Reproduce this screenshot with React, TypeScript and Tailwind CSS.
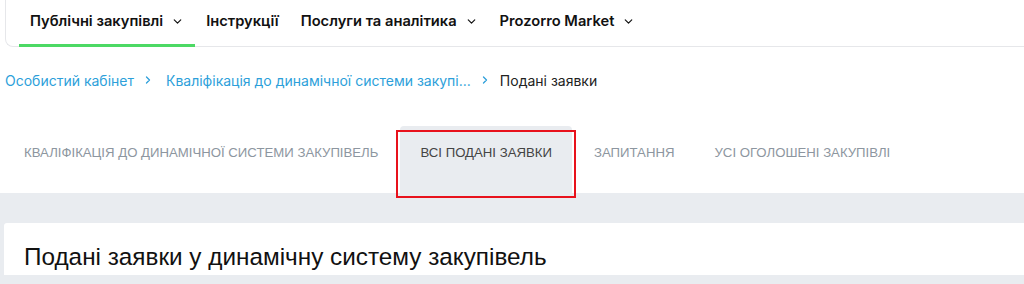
import { ChevronDown, ChevronRight } from "lucide-react";

const navItems = [
  { label: "Публічні закупівлі", dropdown: true, active: true },
  { label: "Інструкції", dropdown: false },
  { label: "Послуги та аналітика", dropdown: true },
  { label: "Prozorro Market", dropdown: true },
];

const tabs = [
  { label: "КВАЛІФІКАЦІЯ ДО ДИНАМІЧНОЇ СИСТЕМИ ЗАКУПІВЕЛЬ" },
  { label: "ВСІ ПОДАНІ ЗАЯВКИ", active: true },
  { label: "ЗАПИТАННЯ" },
  { label: "УСІ ОГОЛОШЕНІ ЗАКУПІВЛІ" },
];

export default function App() {
  return (
    <div className="w-[1024px] h-[284px] overflow-hidden bg-white">
      {/* top nav */}
      <div className="pl-[5px]">
        <div className="flex h-[47px] items-stretch border-l border-b border-[#e6e7ea] rounded-bl-[8px] pl-[13px] font-['Inter',sans-serif] text-[14.7px] font-semibold text-[#111]">
          {navItems.map((item) => (
            <div
              key={item.label}
              className={
                "flex items-center gap-[8px] px-[11px] pb-[2px] border-b-[3px] -mb-px " +
                (item.active ? "border-[#4cd964]" : "border-transparent")
              }
            >
              <span>{item.label}</span>
              {item.dropdown && <ChevronDown size={13} strokeWidth={2.2} className="mt-px" />}
            </div>
          ))}
        </div>
      </div>

      {/* breadcrumbs */}
      <div className="flex items-center h-[20px] mt-[23px] pl-[5px] font-['Inter',sans-serif] text-[14px] text-[#2d9fda]">
        <span>Особистий кабінет</span>
        <ChevronRight size={12} strokeWidth={2.6} className="ml-[8px] mr-[12px] text-[#2d9fda]" />
        <span>Кваліфікація до динамічної системи закупі...</span>
        <ChevronRight size={12} strokeWidth={2.6} className="ml-[8px] mr-[9px] text-[#2d9fda]" />
        <span className="text-[#222]">Подані заявки</span>
      </div>

      {/* tabs */}
      <div className="flex items-stretch h-[67px] mt-[36px] pl-[4px] font-['Liberation_Sans',Arial,sans-serif] text-[13.2px]">
        {tabs.map((t) => (
          <div
            key={t.label}
            className={
              "relative flex items-start pt-[17px] px-[20px] " +
              (t.active ? "bg-[#e9ecf0] text-[#444] rounded-t-[4px] mx-[2px]" : "text-[#8d96a0]")
            }
          >
            {t.label}
            {t.active && (
              <div className="absolute left-[-4px] right-[-4px] top-[4px] bottom-[-5px] border-2 border-[#e8121c]" />
            )}
          </div>
        ))}
      </div>

      {/* content */}
      <div className="bg-[#e9ecf0] pt-[30px] pl-[4px] h-[200px]">
        <div className="bg-white rounded-tl-[3px] pt-[16px] pl-[20px] font-['Liberation_Sans',Arial,sans-serif] text-[24.3px] text-[#111]">
          Подані заявки у динамічну систему закупівель
        </div>
      </div>
    </div>
  );
}
